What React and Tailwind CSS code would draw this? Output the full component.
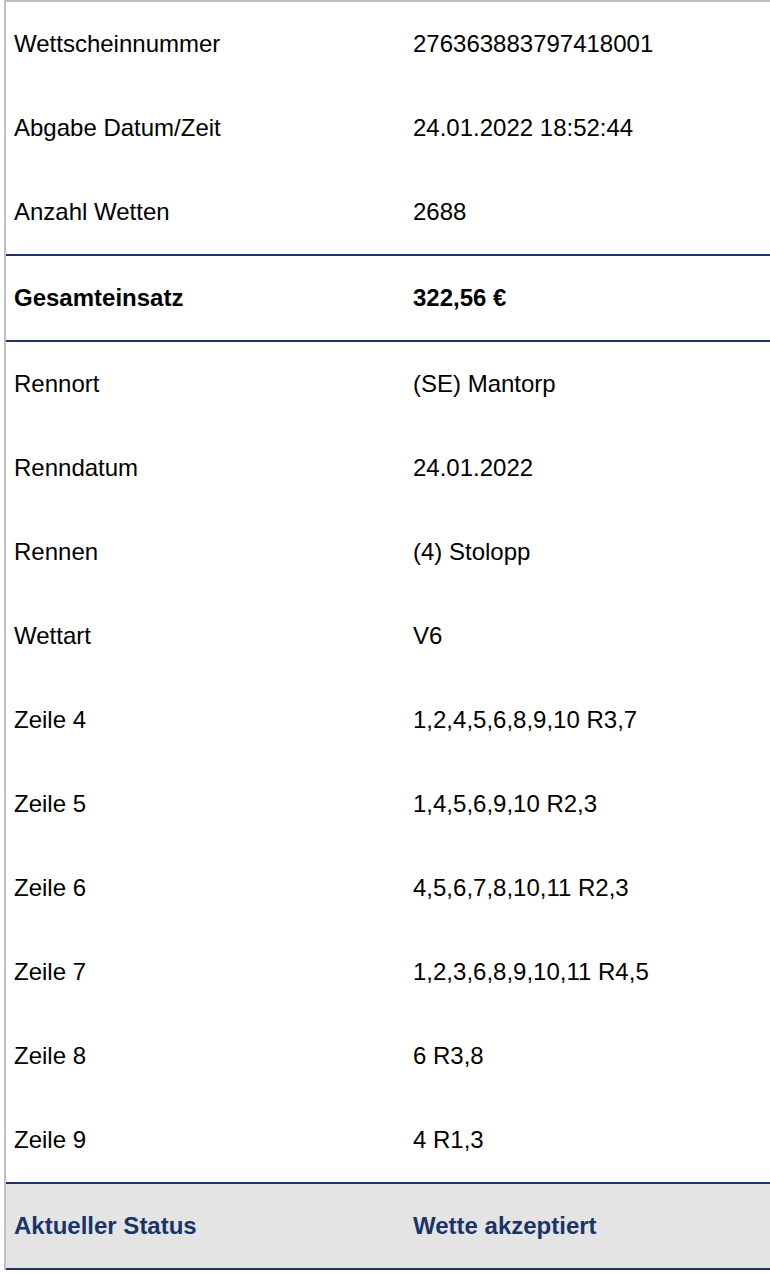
const head = [
  ['Wettscheinnummer', '276363883797418001'],
  ['Abgabe Datum/Zeit', '24.01.2022 18:52:44'],
  ['Anzahl Wetten', '2688'],
];

const details = [
  ['Rennort', '(SE) Mantorp'],
  ['Renndatum', '24.01.2022'],
  ['Rennen', '(4) Stolopp'],
  ['Wettart', 'V6'],
  ['Zeile 4', '1,2,4,5,6,8,9,10 R3,7'],
  ['Zeile 5', '1,4,5,6,9,10 R2,3'],
  ['Zeile 6', '4,5,6,7,8,10,11 R2,3'],
  ['Zeile 7', '1,2,3,6,8,9,10,11 R4,5'],
  ['Zeile 8', '6 R3,8'],
  ['Zeile 9', '4 R1,3'],
];

function Row({ label, value, className = '' }) {
  return (
    <div className={`grid h-[84px] grid-cols-[398px_1fr] items-center ${className}`}>
      <div className="pl-[8px]">{label}</div>
      <div className="pl-[9px]">{value}</div>
    </div>
  );
}

export default function App() {
  return (
    <div className="min-h-[1274px] overflow-hidden bg-white pl-[4px] text-[24px] leading-none text-black" style={{ fontFamily: '"Liberation Sans", Arial, sans-serif' }}>
      <div className="border-l-2 border-t-2 border-[#c0c0c0]">
        {head.map(([l, v]) => <Row key={l} label={l} value={v} />)}
        <div className="border-y-2 border-[#1b3468]">
          <Row label="Gesamteinsatz" value="322,56 €" className="font-bold" />
        </div>
        {details.map(([l, v]) => <Row key={l} label={l} value={v} />)}
        <div className="border-y-2 border-[#1b3468] bg-[#e4e4e4]">
          <Row label="Aktueller Status" value="Wette akzeptiert" className="font-bold text-[#1b3468]" />
        </div>
      </div>
    </div>
  );
}
